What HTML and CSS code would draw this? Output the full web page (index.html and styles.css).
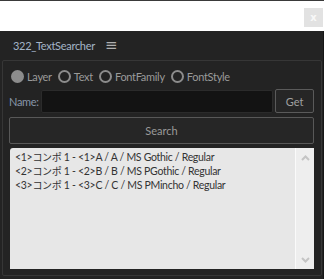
FILE: index.html
```html
<!DOCTYPE html>
<html lang="ja">
<head>
    <meta charset="UTF-8">
    <meta name="viewport" content="width=device-width, initial-scale=1.0">
    <title>322_TextSearcher</title>
    <link rel="stylesheet" href="styles.css">
</head>
<body>
    <div class="topbar">
        <button class="close-btn">x</button>
    </div>
    <div class="window">
        <div class="title-row">
            <span class="title">322_TextSearcher</span>
            <span class="menu">&#8801;</span>
        </div>
        <div class="panel">
            <div class="radio-row">
                <label class="radio"><span class="dot checked"></span>Layer</label>
                <label class="radio"><span class="dot"></span>Text</label>
                <label class="radio"><span class="dot"></span>FontFamily</label>
                <label class="radio"><span class="dot"></span>FontStyle</label>
            </div>
            <div class="name-row">
                <span class="name-label">Name:</span>
                <input class="name-input" type="text">
                <button class="get-btn">Get</button>
            </div>
            <button class="search-btn">Search</button>
            <div class="list">
                <div class="items">
                    <div class="item">&lt;1&gt;<span class="jp">コンポ</span> 1 - &lt;1&gt;A / A / MS Gothic / Regular</div>
                    <div class="item">&lt;2&gt;<span class="jp">コンポ</span> 1 - &lt;2&gt;B / B / MS PGothic / Regular</div>
                    <div class="item">&lt;3&gt;<span class="jp">コンポ</span> 1 - &lt;3&gt;C / C / MS PMincho / Regular</div>
                </div>
                <div class="scrollbar">
                    <svg width="9" height="6" viewBox="0 0 9 6"><path d="M1 5 L4.5 1.5 L8 5" fill="none" stroke="#c4c4c4" stroke-width="2"/></svg>
                    <svg width="9" height="6" viewBox="0 0 9 6"><path d="M1 1 L4.5 4.5 L8 1" fill="none" stroke="#c4c4c4" stroke-width="2"/></svg>
                </div>
            </div>
        </div>
    </div>
</body>
</html>
```

FILE: styles.css
```css
* {
    margin: 0;
    padding: 0;
    box-sizing: border-box;
}
body {
    background: #ffffff;
    font-family: Lato, "Noto Sans CJK JP", sans-serif;
    font-size: 11px;
    letter-spacing: -0.3px;
    width: 324px;
    height: 279px;
    overflow: hidden;
}
.topbar {
    height: 31px;
    border-top: 1px solid #3a3a3a;
    display: flex;
    justify-content: flex-end;
    align-items: flex-start;
    padding-top: 7px;
    padding-right: 1px;
}
.close-btn {
    width: 19px;
    height: 19px;
    background: #e2e2e2;
    border: none;
    color: #f8f8f8;
    font-size: 10px;
    font-weight: bold;
    line-height: 19px;
    font-family: "DejaVu Sans", sans-serif;
}
.window {
    background: #232323;
    height: 248px;
    border-right: 1px solid #161616;
    padding-bottom: 3px;
}
.title-row {
    height: 29px;
    display: flex;
    align-items: center;
    padding-left: 13px;
    gap: 10px;
}
.title {
    color: #a4b4c7;
    font-size: 11px;
}
.menu {
    color: #b0b0b0;
    font-size: 15px;
    font-family: "DejaVu Sans", sans-serif;
    line-height: 1;
}
.panel {
    margin: 0 1px 0 2px;
    height: 216px;
    border: 1px solid #363636;
    border-radius: 2px;
    padding: 9px 7px 0 6px;
    display: flex;
    flex-direction: column;
}
.radio-row {
    display: flex;
    align-items: center;
    height: 12px;
    padding-left: 2px;
}
.radio {
    display: flex;
    align-items: center;
    color: #9a9a9a;
    margin-right: 6px;
}
.dot {
    width: 13px;
    height: 13px;
    border-radius: 50%;
    border: 2px solid #8c8c8c;
    margin-right: 3px;
}
.dot.checked {
    background: #8c8c8c;
}
.name-row {
    display: flex;
    align-items: center;
    margin-top: 7px;
    height: 24px;
}
.name-label {
    color: #8896a9;
    width: 32px;
}
.name-input {
    width: 232px;
    height: 23px;
    background: #131313;
    border: 1px solid #2b2b2b;
    border-radius: 2px;
    margin-right: 2px;
}
.get-btn {
    width: 39px;
    height: 24px;
    background: #262626;
    border: 1px solid #5a5a5a;
    border-radius: 2px;
    color: #a0a0a0;
    font-family: Lato, sans-serif;
    font-size: 11px;
}
.search-btn {
    margin-top: 4px;
    height: 27px;
    background: #262626;
    border: 1px solid #585858;
    border-radius: 2px;
    color: #9a9a9a;
    font-family: Lato, sans-serif;
    font-size: 11px;
}
.list {
    margin-top: 4px;
    margin-left: 1px;
    height: 121px;
    background: #e7e7e7;
    border-radius: 3px 3px 0 0;
    display: flex;
}
.items {
    flex: 1;
    padding: 2px 0 0 5px;
    border-right: 1px solid #fafafa;
}
.item {
    color: #333333;
    font-size: 10.5px;
    line-height: 14px;
    letter-spacing: -0.3px;
}
.jp {
    font-size: 10px;
}
.scrollbar {
    width: 18px;
    background: #eeeeee;
    display: flex;
    flex-direction: column;
    justify-content: space-between;
    align-items: center;
    padding: 7px 0 6px;
}
```
